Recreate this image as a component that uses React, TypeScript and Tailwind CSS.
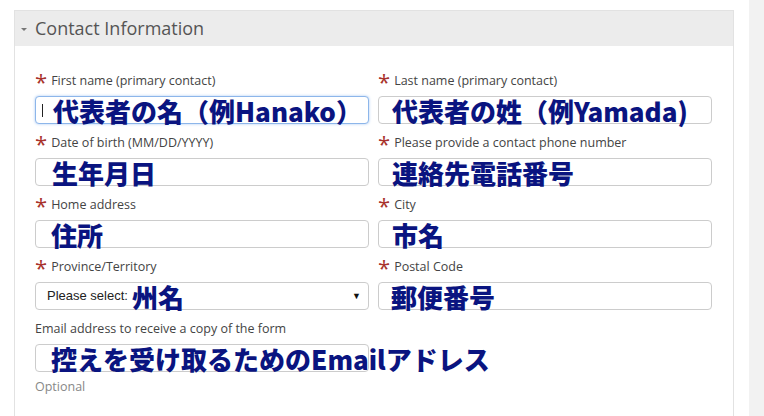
import type { ReactNode } from 'react';

const overlay = "font-['Noto_Sans_CJK_JP',sans-serif] text-[26px] font-black leading-none text-[#0a1480] whitespace-nowrap mt-[2px]";

type FieldProps = {
  label: string;
  required?: boolean;
  children: ReactNode;
  focused?: boolean;
  indent?: string;
};

const Field = ({ label, required = true, children, focused = false, indent = 'pl-[16px]' }: FieldProps) => (
  <div className="flex flex-col">
    <div className="h-[20px] flex items-center text-[12.5px] text-[#444] font-['Open_Sans',sans-serif]">
      {required && (
        <span className="text-[#a8322c] text-[22px] leading-none h-[14px] mr-[4px] -translate-y-[4px]">*</span>
      )}
      {label}
    </div>
    <div
      className={`relative mt-[5px] h-[28px] rounded-[4px] border bg-white flex items-center ${indent} ${
        focused ? 'border-[#8db6ea] shadow-[0_0_3px_#a9c9f2]' : 'border-[#cccccc]'
      }`}
    >
      {children}
    </div>
  </div>
);

export default function App() {
  return (
    <div className="w-[764px] h-[416px] overflow-hidden bg-white flex">
      <div className="w-[749px] pl-[14px] pt-[10px]">
        <div className="w-[720px] h-[420px] border border-b-0 border-[#e2e2e2]">
          <div className="h-[35px] bg-[#ececec] flex items-center pl-[6px] gap-[8px]">
            <span className="w-0 h-0 border-l-[3px] border-r-[3px] border-t-[3px] border-l-transparent border-r-transparent border-t-[#777] mt-[1px]" />
            <span className="text-[18px] text-[#555] font-['Open_Sans',sans-serif]">Contact Information</span>
          </div>
          <div className="pt-[25px] pl-[20px] pr-[20px] grid grid-cols-[334px_334px] gap-x-[9px] gap-y-[9px]">
            <Field label="First name (primary contact)" focused indent="pl-[6px]">
              <span className="w-px h-[13px] bg-[#222] mr-[10px]" />
              <span className={overlay}>代表者の名（例Hanako）</span>
            </Field>
            <Field label="Last name (primary contact)" indent="pl-[13px]">
              <span className={overlay}>代表者の姓（例Yamada)</span>
            </Field>
            <Field label="Date of birth (MM/DD/YYYY)">
              <span className={overlay}>生年月日</span>
            </Field>
            <Field label="Please provide a contact phone number" indent="pl-[13px]">
              <span className={overlay}>連絡先電話番号</span>
            </Field>
            <Field label="Home address" indent="pl-[15px]">
              <span className={overlay}>住所</span>
            </Field>
            <Field label="City" indent="pl-[13px]">
              <span className={overlay}>市名</span>
            </Field>
            <Field label="Province/Territory" indent="pl-[11px]">
              <span className="text-[13px] text-[#222] font-['Liberation_Sans',sans-serif] mr-[4px]">Please select:</span>
              <span className={overlay}>州名</span>
              <span className="ml-auto mr-[7px] text-[9px] text-[#111]">▼</span>
            </Field>
            <Field label="Postal Code" indent="pl-[12px]">
              <span className={overlay}>郵便番号</span>
            </Field>
            <div className="col-span-2">
              <div className="w-[334px]">
                <Field label="Email address to receive a copy of the form" required={false} indent="pl-[15px]">
                  <span className={overlay}>控えを受け取るためのEmailアドレス</span>
                </Field>
              </div>
              <div className="mt-[6px] text-[12.5px] text-[#888] font-['Open_Sans',sans-serif]">Optional</div>
            </div>
          </div>
        </div>
      </div>
      <div className="flex-1 bg-[#f2f2f2]" />
    </div>
  );
}
